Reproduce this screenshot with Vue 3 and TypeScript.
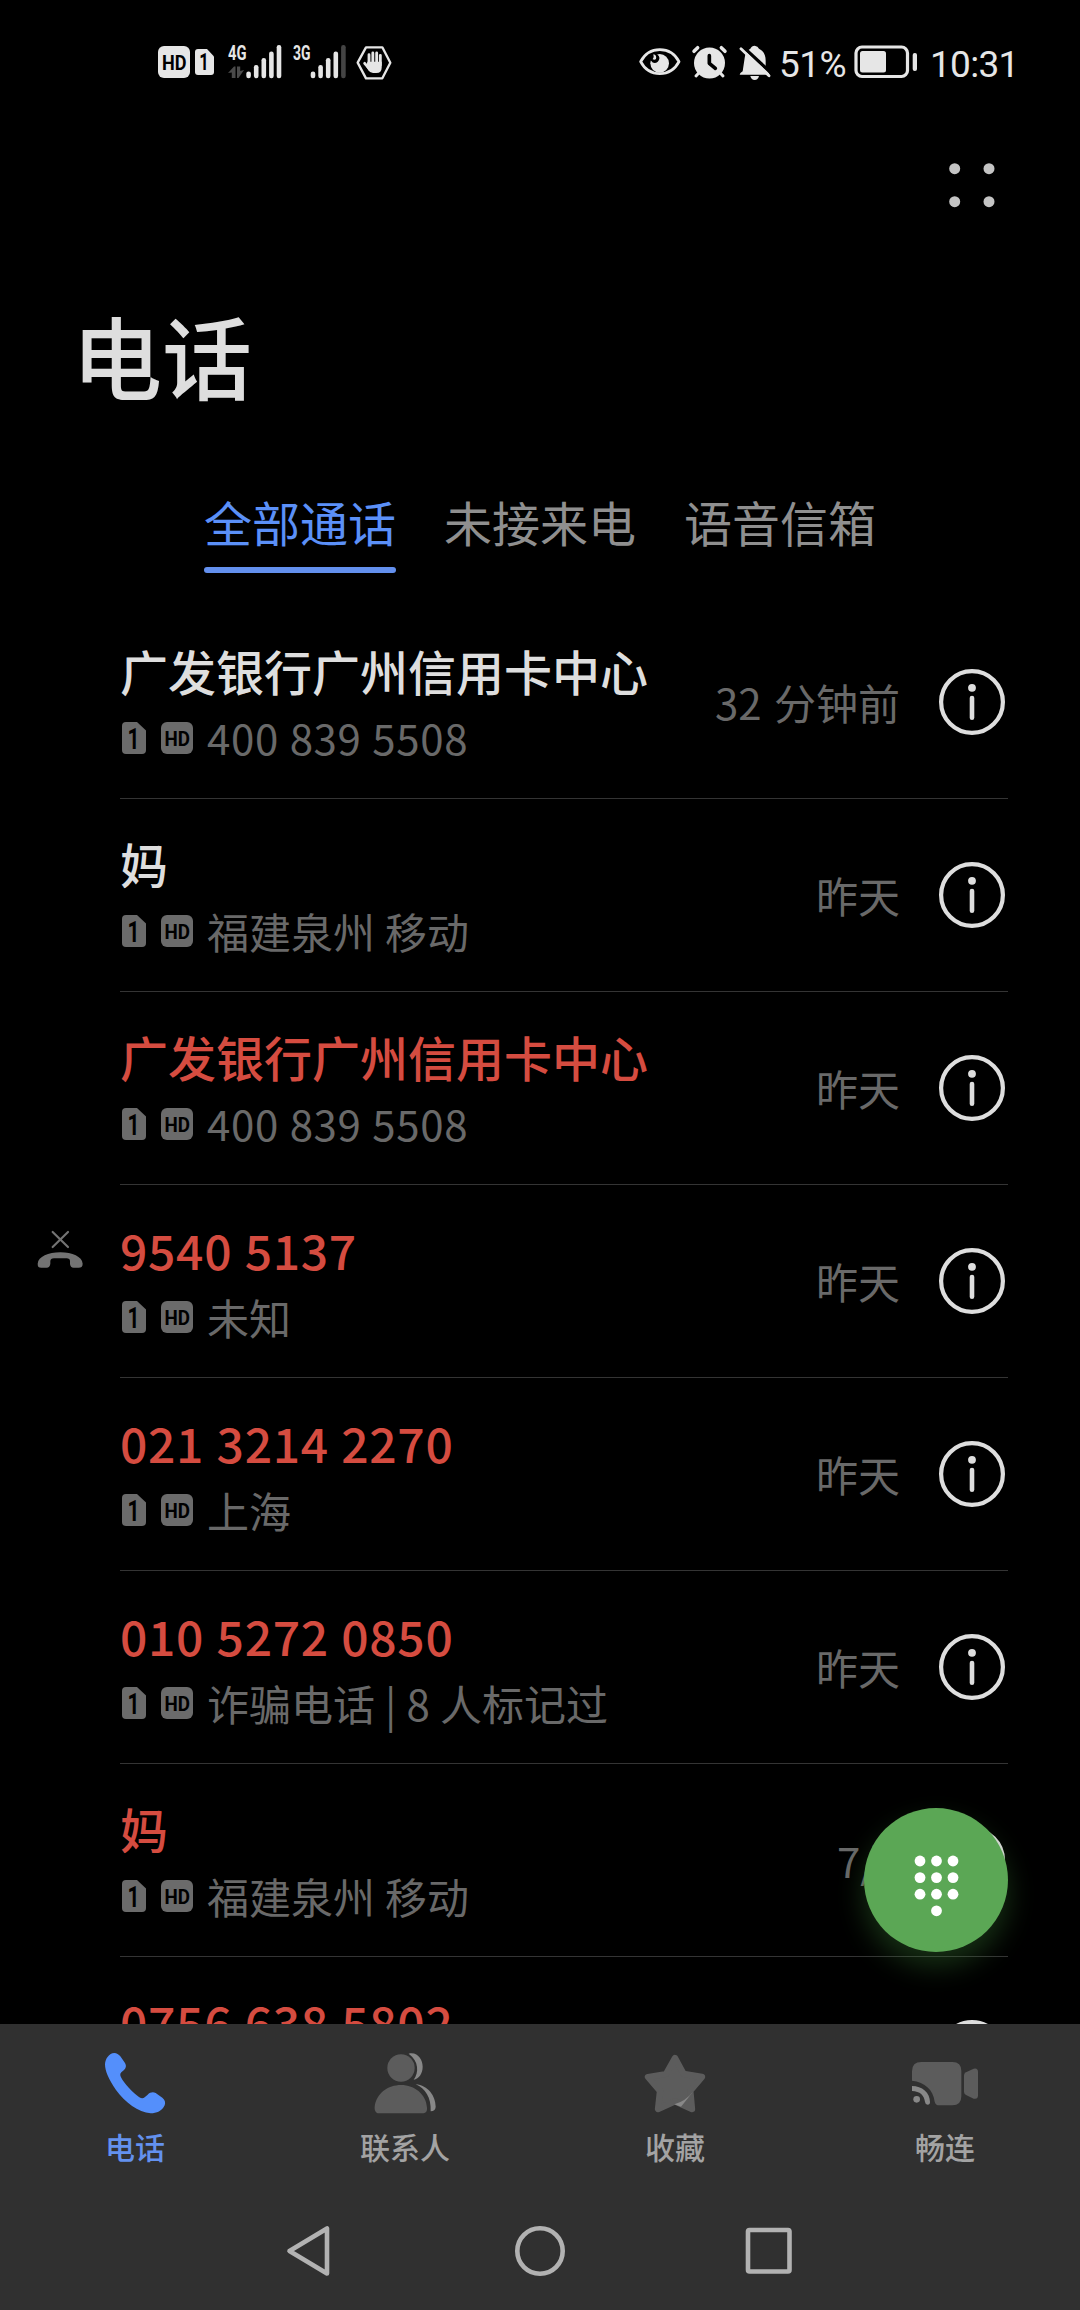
<script setup lang="ts">
interface Call {
  name: string
  detail?: string
  time: string
  missed?: boolean
  rejected?: boolean
}

const tabs = ['全部通话', '未接来电', '语音信箱']

const calls: Call[] = [
  { name: '广发银行广州信用卡中心', detail: '400 839 5508', time: '32 分钟前' },
  { name: '妈', detail: '福建泉州 移动', time: '昨天' },
  { name: '广发银行广州信用卡中心', detail: '400 839 5508', time: '昨天', missed: true },
  { name: '9540 5137', detail: '未知', time: '昨天', missed: true, rejected: true },
  { name: '021 3214 2270', detail: '上海', time: '昨天', missed: true },
  { name: '010 5272 0850', detail: '诈骗电话 | 8 人标记过', time: '昨天', missed: true },
  { name: '妈', detail: '福建泉州 移动', time: '7/4', missed: true },
  { name: '0756 638 5802', time: '', missed: true },
]

const isNumber = (s: string) => /^\d/.test(s)

const bars = [
  { x: 0, y: 26.5 },
  { x: 7.6, y: 20 },
  { x: 15.2, y: 13 },
  { x: 22.8, y: 6.5 },
  { x: 30.4, y: 0 },
]

const keys = [
  [0, 0], [16.5, 0], [33, 0],
  [0, 16.6], [16.5, 16.6], [33, 16.6],
  [0, 33.2], [16.5, 33.2], [33, 33.2],
  [16.5, 49.8],
]
</script>

<template>
  <div class="phone">
    <header class="status">
      <div class="status-left">
        <svg class="hd" width="32" height="32" viewBox="0 0 32 32">
          <rect width="32" height="32" rx="6" fill="#e6e6e6" />
          <text x="4" y="23.6" class="badge" font-size="20" textLength="24.5" lengthAdjust="spacingAndGlyphs">HD</text>
        </svg>
        <svg class="sim" width="19" height="26" viewBox="0 0 19 26">
          <path d="M3 0H12L19 7.5V23Q19 26 16 26H3Q0 26 0 23V3Q0 0 3 0Z" fill="#e6e6e6" />
          <text x="4.2" y="21.4" class="badge" font-size="23" textLength="9.5" lengthAdjust="spacingAndGlyphs">1</text>
        </svg>
        <svg class="signal" width="54" height="34" viewBox="0 0 54 34">
          <text x="0" y="14.6" class="net" font-size="19.5" textLength="18.5" lengthAdjust="spacingAndGlyphs">4G</text>
          <path d="M0 28L6 21.5H7.500V33H3.800V27.500ZM9 21.500H12.200V26L16 25L10.500 33H9Z" fill="#4a4a4a" />
          <rect v-for="b in bars" :key="b.x" :x="18.3 + b.x" :y="b.y" width="4.6" :height="33.3 - b.y" rx="2.2" fill="#e6e6e6" />
        </svg>
        <svg class="signal3" width="54" height="34" viewBox="0 0 54 34">
          <text x="0" y="14.6" class="net" font-size="19.5" textLength="17.5" lengthAdjust="spacingAndGlyphs">3G</text>
          <rect v-for="(b, i) in bars" :key="b.x" :x="17.7 + b.x" :y="b.y" width="4.6" :height="33.3 - b.y" rx="2.2" :fill="i === 4 ? '#444' : '#e6e6e6'" />
        </svg>
        <svg class="hand" width="36" height="35" viewBox="649 44 108 105">
          <path d="M654 97L679 51H728L752 97L728 144H679Z" fill="none" stroke="#e6e6e6" stroke-width="7" stroke-linejoin="round" />
          <g stroke="#e6e6e6" stroke-width="8.5" stroke-linecap="round" fill="none">
            <path d="M688 73V105M699.500 68V105M711 68V105M722 75V105M675 99L688 114" />
          </g>
          <path d="M683 94H726V112Q726 128 710 128H700Q691 128 686 120L680 110Z" fill="#e6e6e6" />
        </svg>
      </div>
      <div class="status-right">
        <svg class="eye" width="42" height="30" viewBox="56 50 126 90">
          <path d="M61 94C86 46 151 46 176 94C151 142 86 142 61 94Z" fill="none" stroke="#e6e6e6" stroke-width="8.500" stroke-linejoin="round" />
          <circle cx="118" cy="99" r="28" fill="#e6e6e6" />
          <path d="M89 90Q92 70 108 70Q119 77 117 86Q113 98 103 98Q96 98 93 92Z" fill="#000" />
          <path d="M99 72Q110 74 107 86Q103 90 97 87Q102 80 99 72Z" fill="#e6e6e6" />
        </svg>
        <svg class="alarm" width="35" height="34" viewBox="216 44 105 102">
          <circle cx="268.500" cy="98" r="46.500" fill="#e6e6e6" />
          <path d="M222 63L233 52M315 63L304 52" stroke="#e6e6e6" stroke-width="10.500" stroke-linecap="round" />
          <path d="M228 137L237 127M309 137L300 127" stroke="#e6e6e6" stroke-width="9" stroke-linecap="round" />
          <path d="M268 76V99L286 114" fill="none" stroke="#000" stroke-width="11" stroke-linecap="round" stroke-linejoin="round" />
        </svg>
        <svg class="bell" width="32" height="35" viewBox="357 43 96 105">
          <path d="M404 45Q414 46 417 54C432 61 437 74 437 90V108L449 132H359Q359 127 368 122L374 82C375 68 381 59 391 54Q395 45 404 45Z" fill="#e6e6e6" />
          <path d="M391 136H417Q414 148 404 148Q394 148 391 136Z" fill="#e6e6e6" />
          <path d="M367 47L456 129" stroke="#000" stroke-width="10" />
          <path d="M363 54L447 135" stroke="#e6e6e6" stroke-width="8.500" stroke-linecap="round" />
        </svg>
        <span class="pct">51%</span>
        <svg class="battery" width="64" height="34" viewBox="0 0 64 34">
          <rect x="2" y="2" width="51.500" height="29.500" rx="6" fill="none" stroke="#e6e6e6" stroke-width="3.200" />
          <rect x="6" y="6" width="26" height="21.500" rx="2.500" fill="#e6e6e6" />
          <rect x="58.700" y="8" width="4.300" height="18" rx="2" fill="#e6e6e6" />
        </svg>
        <span class="clock">10:31</span>
      </div>
    </header>

    <div class="menu">
      <svg width="46" height="44" viewBox="0 0 46 44" fill="#c4c4c4">
        <circle cx="5.700" cy="5.700" r="5.500" /><circle cx="40" cy="5.700" r="5.500" />
        <circle cx="5.700" cy="38.700" r="5.500" /><circle cx="40" cy="38.700" r="5.500" />
      </svg>
    </div>

    <h1>电话</h1>

    <nav class="tabs">
      <span v-for="(t, i) in tabs" :key="t" class="tab" :class="{ active: i === 0 }">{{ t }}</span>
    </nav>

    <main class="list">
      <div v-for="(c, i) in calls" :key="i" class="row">
        <div class="gutter">
          <svg v-if="c.rejected" width="46" height="38" viewBox="51 119 138 114">
            <path d="M98 125L144 170M144 125L98 170" stroke="#737373" stroke-width="6.500" stroke-linecap="round" />
            <path d="M53 220C55 199 85 186 121 186C157 186 186 199 188 220C188 229 183 232 176 232H161C154 232 151 228 150 221V212C150 207 146 205 140 204H102C95 205 91 207 91 213V220C90 228 86 232 80 232H64C56 232 53 229 53 220Z" fill="#737373" />
          </svg>
        </div>
        <div class="body">
          <div class="text">
            <div class="name" :class="{ missed: c.missed, num: isNumber(c.name) }">{{ c.name }}</div>
            <div v-if="c.detail" class="sub">
              <svg width="24" height="32" viewBox="0 0 24 32">
                <path d="M4 0H15L24 8.500V28Q24 32 20 32H4Q0 32 0 28V4Q0 0 4 0Z" fill="#6b6b6b" />
                <text x="5.500" y="27" class="badge" font-size="29" textLength="12" lengthAdjust="spacingAndGlyphs">1</text>
              </svg>
              <svg class="sub-hd" width="32" height="32" viewBox="0 0 32 32">
                <rect width="32" height="32" rx="6" fill="#6b6b6b" />
                <text x="3.500" y="23.800" class="badge" font-size="21" textLength="25.500" lengthAdjust="spacingAndGlyphs">HD</text>
              </svg>
              <span class="detail" :class="{ num: isNumber(c.detail) }">{{ c.detail }}</span>
            </div>
          </div>
          <span class="time">{{ c.time }}</span>
          <svg class="info" width="66" height="66" viewBox="0 0 66 66">
            <circle cx="33" cy="33" r="30.900" fill="none" stroke="#dedede" stroke-width="4.200" />
            <circle cx="33" cy="18.800" r="3.900" fill="#dedede" />
            <path d="M33 29V48.800" stroke="#dedede" stroke-width="4.600" stroke-linecap="round" />
          </svg>
        </div>
      </div>
      <button class="fab">
        <svg width="45" height="62" viewBox="-6 -6 45 62">
          <circle v-for="(k, i) in keys" :key="i" :cx="k[0]" :cy="k[1]" r="5.400" fill="#fff" />
        </svg>
      </button>
    </main>

    <footer class="bottom">
      <div class="item on">
        <svg width="64" height="64" viewBox="129 95 192 192">
          <path fill="#548ffb" d="M163 101C170 101 176 105 181 111L195 131C200 139 198 147 192 152L184 159C180 163 180 168 183 174C192 192 218 220 238 234C244 238 250 238 254 234L263 226C270 219 279 217 287 221L307 235C315 241 317 250 314 258C306 275 290 282 272 282C235 278 195 250 168 212C146 180 135 155 135 135C136 118 147 102 163 101Z" />
        </svg>
        <span>电话</span>
      </div>
      <div class="item">
        <svg width="64" height="64" viewBox="940 95 192 192">
          <g fill="#888">
            <path d="M1047 103C1075 97 1089 122 1089 142C1089 162 1078 178 1062 181C1078 160 1078 125 1047 103Z" />
            <path d="M1068 195C1105 198 1128 230 1128 262C1128 270 1123 275 1113 276C1115 235 1097 208 1068 195Z" />
          </g>
          <g fill="#5c5c5c">
            <circle cx="1024" cy="146" r="41" />
            <path d="M945 262C950 222 985 197 1024 197C1065 197 1100 225 1102 265C1103 276 1098 282 1088 282H958C949 282 944 274 945 262Z" />
          </g>
        </svg>
        <span>联系人</span>
      </div>
      <div class="item">
        <svg width="64" height="64" viewBox="129 95 192 192">
          <path d="M225 116L251 164L306 173L271 214L276 269L225 246L174 269L180 215L144 173L198 164Z" fill="#5c5c5c" stroke="#5c5c5c" stroke-width="19" stroke-linejoin="round" />
          <path d="M279 217L243 262L223 255Q257 245 279 217Z" fill="#888" />
        </svg>
        <span>收藏</span>
      </div>
      <div class="item">
        <svg width="70" height="64" viewBox="930 95 210 192">
          <path d="M964 128H1057Q1084 128 1084 155V231Q1084 258 1057 258H1018Q1006 258 1004 247C1000 212 975 188 936 184V156Q936 128 964 128Z" fill="#5c5c5c" />
          <path d="M1092 168Q1092 162 1098 159L1121 148Q1134 145 1134 158V228Q1134 241 1121 238L1098 227Q1092 224 1092 218Z" fill="#5c5c5c" />
          <path d="M936 200C966 200 990 220 990 248Q990 256 983 256Q976 256 975 248C973 228 960 216 936 215Z" fill="#888" />
          <circle cx="950" cy="240" r="10" fill="#888" />
        </svg>
        <span>畅连</span>
      </div>
    </footer>

    <div class="sysnav">
      <svg class="back" width="44" height="52" viewBox="0 0 44 52"><path d="M3.500 26L41 3.500V48.500Z" /></svg>
      <svg class="home" width="52" height="52" viewBox="0 0 52 52"><circle cx="26" cy="26" r="22.700" /></svg>
      <svg class="recent" width="48" height="48" viewBox="0 0 48 48"><rect x="3" y="3" width="41.500" height="41.500" rx="1.500" /></svg>
    </div>
  </div>
</template>

<style>
body {
  background: #000;
}
</style>

<style scoped>
.phone {
  width: 1080px;
  height: 2310px;
  background: #000;
  color: #dedede;
  font-family: "Noto Sans CJK SC", sans-serif;
  display: flex;
  flex-direction: column;
  overflow: hidden;
}
svg {
  display: block;
  flex: none;
  overflow: visible;
}
.badge {
  font-family: Roboto, sans-serif;
  font-weight: 700;
  fill: #000;
}
.net {
  font-family: Roboto, sans-serif;
  font-weight: 700;
  fill: #e6e6e6;
}
.status {
  height: 124px;
  display: flex;
  justify-content: space-between;
  flex: none;
}
.status-left,
.status-right {
  display: flex;
  align-items: center;
  height: 124px;
  color: #e6e6e6;
}
.status-left {
  padding-left: 158px;
}
.sim {
  margin-left: 5px;
}
.signal {
  margin-left: 13.5px;
}
.signal3 {
  margin-left: 11.5px;
}
.hand {
  margin-left: 9px;
}
.status-right {
  padding-right: 62px;
}
.alarm {
  margin-left: 11px;
}
.bell {
  margin-left: 12px;
}
.pct,
.clock {
  font-family: Roboto, "Noto Sans CJK SC", sans-serif;
  font-size: 37px;
  line-height: 50px;
  padding-top: 5px;
  white-space: nowrap;
  box-sizing: border-box;
}
.pct {
  width: 83px;
  padding-left: 8px;
  letter-spacing: -0.6px;
}
.clock {
  width: 88px;
  margin-left: 12px;
  letter-spacing: -0.7px;
}
.menu {
  display: flex;
  justify-content: flex-end;
  height: 182px;
  padding: 39px 85px 0 0;
  box-sizing: border-box;
  flex: none;
}
h1 {
  margin: 0;
  padding-left: 72px;
  height: 175px;
  font-size: 90px;
  line-height: 96px;
  font-weight: 500;
  flex: none;
}
.tabs {
  display: flex;
  justify-content: center;
  gap: 48px;
  height: 125px;
  flex: none;
}
.tab {
  font-size: 48px;
  line-height: 80px;
  color: #8f8f8f;
}
.tab.active {
  color: #5b90f8;
}
.tab.active::after {
  content: "";
  display: block;
  margin-top: 6px;
  height: 6px;
  border-radius: 3px;
  background: #6390ee;
}
.list {
  position: relative;
  height: 1418px;
  overflow: hidden;
  flex: none;
}
.row {
  display: flex;
  height: 193px;
}
.gutter {
  width: 120px;
  padding: 45px 0 0 37px;
  box-sizing: border-box;
  flex: none;
}
.body {
  width: 888px;
  display: flex;
  align-items: center;
  border-bottom: 1px solid #343434;
  box-sizing: border-box;
}
.text {
  flex: 1;
  align-self: flex-start;
  padding-top: 34px;
}
.name {
  font-size: 48px;
  line-height: 60px;
  font-weight: 500;
  white-space: nowrap;
}
.name.missed {
  color: #d54c40;
}
.name.num {
  letter-spacing: 0.7px;
  word-spacing: 0.9px;
}
.sub {
  display: flex;
  align-items: center;
  margin-top: 13px;
  padding-left: 2px;
  height: 50px;
}
.sub-hd {
  margin-left: 15px;
}
.detail {
  margin-left: 14px;
  font-size: 42px;
  line-height: 50px;
  color: #696969;
  word-spacing: 0.7px;
  white-space: nowrap;
}
.detail.num {
  letter-spacing: 0.65px;
  margin-top: -2px;
}
.time {
  font-size: 42px;
  line-height: 50px;
  color: #696969;
  word-spacing: 3px;
  margin-right: 39px;
}
.info {
  margin-right: 3px;
}
.fab {
  position: absolute;
  left: 864px;
  top: 1202px;
  width: 144px;
  height: 144px;
  border: 0;
  padding: 12px 0 0;
  border-radius: 50%;
  background: #5ba755;
  box-shadow: 0 14px 28px rgba(60, 130, 55, 0.38);
  display: flex;
  align-items: center;
  justify-content: center;
}
.bottom {
  display: flex;
  height: 168px;
  padding-top: 27px;
  box-sizing: border-box;
  background: #303030;
  flex: none;
}
.item {
  flex: 1;
  display: flex;
  flex-direction: column;
  align-items: center;
  font-size: 30px;
  line-height: 40px;
  font-weight: 500;
  color: #a3a3a3;
}
.item span {
  margin-top: 11px;
}
.item.on {
  color: #6391ee;
}
.sysnav {
  flex: 1;
  display: flex;
  align-items: flex-start;
  padding: 33px 0 0 286px;
  background: #303030;
}
.home {
  margin-left: 184px;
}
.recent {
  margin: 2px 0 0 179px;
}
.sysnav svg * {
  fill: none;
  stroke: #b2b2b2;
  stroke-width: 4.6;
  stroke-linejoin: round;
}
</style>
